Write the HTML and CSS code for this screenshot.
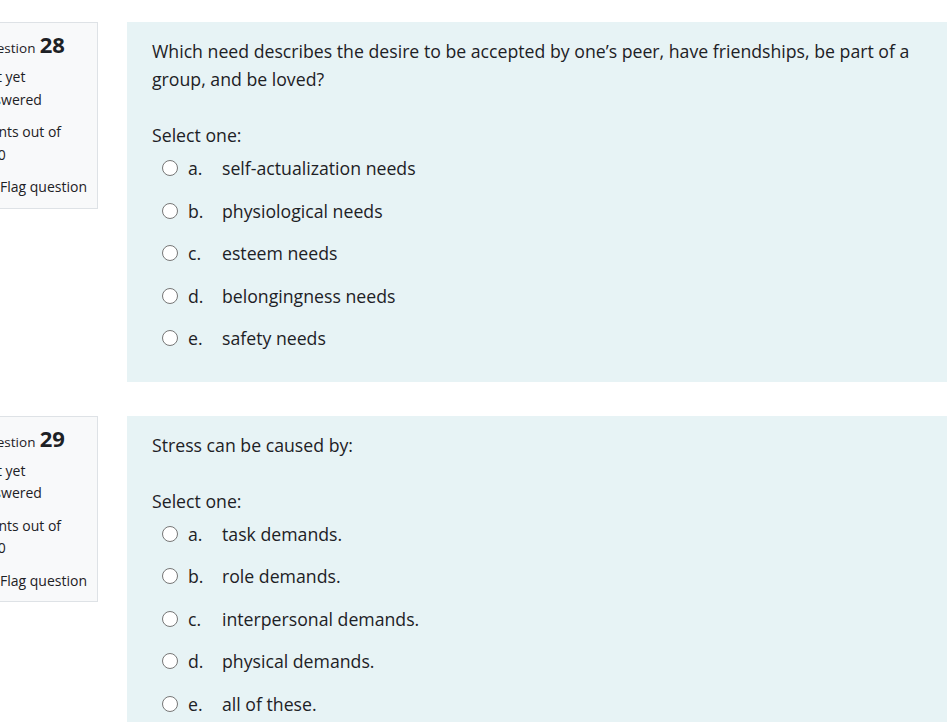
FILE: index.html
```html
<!DOCTYPE html>
<html lang="en">
<head>
<meta charset="utf-8">
<title>Quiz</title>
<link rel="stylesheet" href="styles.css">
</head>
<body>
<div class="page">
  <div class="que">
    <div class="info">
      <h3 class="qno"><span class="qlabel">Question</span> <span class="num">28</span></h3>
      <div class="state">Not yet answered</div>
      <div class="grade">Points out of 1.00</div>
      <div class="flag"><svg class="flagicon" viewBox="0 0 16 16" width="16" height="16"><path d="M3 1v14M3 2h9l-2 3.5 2 3.5H3" fill="none" stroke="#6c757d" stroke-width="1.4"/></svg>Flag question</div>
    </div>
    <div class="content">
      <div class="qtext">Which need describes the desire to be accepted by one’s peer, have friendships, be part of a group, and be loved?</div>
      <div class="prompt">Select one:</div>
      <div class="answers">
        <div class="opt"><span class="radio"></span><span class="letter">a.</span><span class="text">self-actualization needs</span></div>
        <div class="opt"><span class="radio"></span><span class="letter">b.</span><span class="text">physiological needs</span></div>
        <div class="opt"><span class="radio"></span><span class="letter">c.</span><span class="text">esteem needs</span></div>
        <div class="opt"><span class="radio"></span><span class="letter">d.</span><span class="text">belongingness needs</span></div>
        <div class="opt"><span class="radio"></span><span class="letter">e.</span><span class="text">safety needs</span></div>
      </div>
    </div>
  </div>
  <div class="que">
    <div class="info">
      <h3 class="qno"><span class="qlabel">Question</span> <span class="num">29</span></h3>
      <div class="state">Not yet answered</div>
      <div class="grade">Points out of 1.00</div>
      <div class="flag"><svg class="flagicon" viewBox="0 0 16 16" width="16" height="16"><path d="M3 1v14M3 2h9l-2 3.5 2 3.5H3" fill="none" stroke="#6c757d" stroke-width="1.4"/></svg>Flag question</div>
    </div>
    <div class="content">
      <div class="qtext">Stress can be caused by:</div>
      <div class="prompt">Select one:</div>
      <div class="answers">
        <div class="opt"><span class="radio"></span><span class="letter">a.</span><span class="text">task demands.</span></div>
        <div class="opt"><span class="radio"></span><span class="letter">b.</span><span class="text">role demands.</span></div>
        <div class="opt"><span class="radio"></span><span class="letter">c.</span><span class="text">interpersonal demands.</span></div>
        <div class="opt"><span class="radio"></span><span class="letter">d.</span><span class="text">physical demands.</span></div>
        <div class="opt"><span class="radio"></span><span class="letter">e.</span><span class="text">all of these.</span></div>
      </div>
    </div>
  </div>
</div>
</body>
</html>
```

FILE: styles.css
```css
html, body {
  margin: 0;
  padding: 0;
  background: #ffffff;
  overflow: hidden;
}
body {
  font-family: "Open Sans", "Noto Sans", "Liberation Sans", sans-serif;
  color: #1d2125;
}
.page {
  padding-top: 22px;
  margin-left: -33px;
}
.que {
  display: flex;
  align-items: flex-start;
  gap: 29px;
  margin-bottom: 34px;
}
.info {
  box-sizing: border-box;
  width: 131px;
  flex: none;
  background: #f8f9fa;
  border: 1px solid #dee2e6;
  padding: 8px 8px 9px 10px;
  font-size: 14px;
  line-height: 22.5px;
}
.qno {
  margin: 0 0 7px;
  height: 28px;
  line-height: 26px;
  font-weight: normal;
  white-space: nowrap;
}
.qlabel {
  font-size: 13.5px;
  color: #1d2125;
}
.num {
  font-size: 22px;
  font-weight: 700;
}
.state, .grade {
  margin-bottom: 10px;
}
.flag {
  display: flex;
  align-items: center;
  gap: 6px;
  white-space: nowrap;
}
.flagicon {
  flex: none;
}
.content {
  flex: 1;
  background: #e7f3f5;
  padding: 15px 25px 22px;
  font-size: 17.7px;
  line-height: 28px;
}
.qtext {
  margin-bottom: 28px;
}
.prompt {
  margin-bottom: -2px;
}
.opt {
  display: flex;
  align-items: center;
  height: 42.5px;
  padding-left: 10px;
}
.radio {
  box-sizing: border-box;
  width: 16px;
  height: 16px;
  border: 1.5px solid #767676;
  border-radius: 50%;
  background: #ffffff;
  flex: none;
}
.letter {
  width: 34px;
  margin-left: 10px;
  flex: none;
}
```
